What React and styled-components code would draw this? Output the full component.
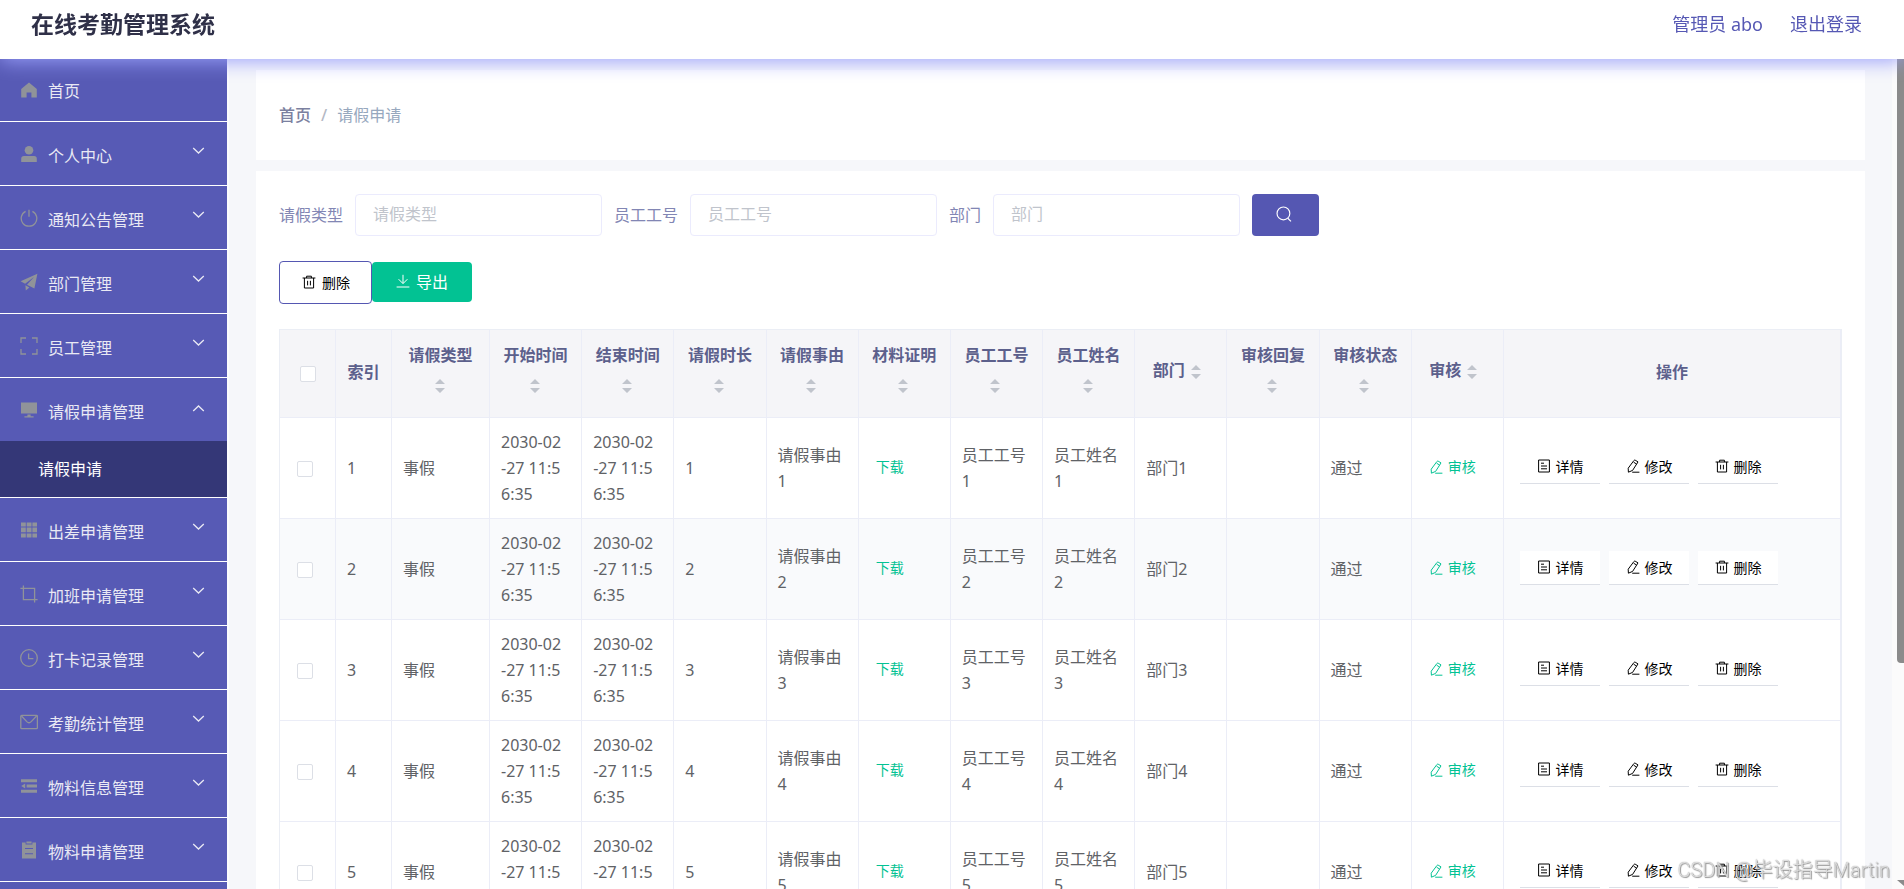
import React, { useState } from 'react';
import styled, { createGlobalStyle } from 'styled-components';

const GlobalStyle = createGlobalStyle`
    * {
        box-sizing: border-box;
    }
    body {
        margin: 0;
        background: #fbfbfb;
        font-family: "Noto Sans", "Noto Sans CJK SC", sans-serif;
        font-size: 16px;
        color: #606266;
    }
    a {
        text-decoration: none;
    }
    button, input {
        font-family: inherit;
    }
`;

//layout
const Page = styled.div`
    display: flex;
    flex-direction: column;
    height: 100vh;
    overflow: hidden;
`;
const Header = styled.header`
    position: relative;
    z-index: 1;
    display: flex;
    flex: none;
    align-items: flex-start;
    justify-content: space-between;
    height: 59px;
    padding: 10px 42px 0 31px;
    background: #fff;
    box-shadow: 0 2px 20px #9a9ffb;
`;
const Title = styled.h1`
    margin: 0;
    font-size: 23px;
    line-height: 28px;
    font-weight: 700;
    color: #2f3048;
`;
const UserNav = styled.nav`
    display: flex;
    gap: 27px;
    font-size: 18px;
    line-height: 28px;
    a {
        color: #5658b4;
    }
`;
const Body = styled.div`
    display: flex;
    flex: 1;
    min-height: 0;
`;
const Main = styled.main`
    flex: 1;
    min-width: 0;
    padding: 11px 27px 30px;
    overflow: auto;
    scrollbar-width: none;
    background: #f6f7fa;
`;
const ScrollRail = styled.div`
    display: flex;
    flex: none;
    flex-direction: column;
    justify-content: space-between;
    align-items: flex-end;
    width: 12px;
    padding-bottom: 3px;
    overflow: hidden;
`;
const ScrollThumb = styled.div`
    width: 7px;
    height: 73%;
    border-radius: 0 0 0 4px;
    background: #8b8b8b;
`;
const ScrollArrow = styled.div`
    width: 7px;
    height: 6px;
    background: #8b8b8b;
    clip-path: polygon(0 0, 100% 0, 100% 100%);
`;

//sidebar
const Sidebar = styled.aside`
    flex: none;
    width: 229px;
    overflow: hidden;
    background: #575ab5;
    border-right: 2px solid #fcfcfe;
`;
const MenuList = styled.ul`
    margin: 0;
    padding: 0;
    list-style: none;
`;
const MenuItem = styled.li`
    border-bottom: 1px solid #fff;
`;
const MenuLink = styled.a`
    display: flex;
    align-items: center;
    height: ${props => props.$home ? 62 : 63}px;
    padding: 0 22px 0 20px;
    color: #e9e9f4;
    svg {
        flex: none;
    }
`;
const MenuText = styled.span`
    flex: 1;
    padding: ${props => props.$home ? "2px 0 0 10px" : "4px 0 0 10px"};
    line-height: 24px;
`;
const SubLink = styled.a`
    display: block;
    padding-left: 38px;
    line-height: 56px;
    color: #fff;
    background: #343777;
`;
const Chevron = styled.svg`
    width: 13px;
    height: 13px;
    margin-bottom: ${props => props.$open ? 2 : 6}px;
    transform: ${props => props.$open ? "rotate(180deg)" : "none"};
`;

//content
const Card = styled.section`
    padding: 23px;
    background: #fff;
    & + & {
        margin-top: 11px;
    }
`;
const Breadcrumb = styled.nav`
    display: flex;
    gap: 10px;
    padding: 10px 0;
    line-height: 24px;
    color: #97a8be;
    a {
        font-weight: 500;
        color: #7b80a0;
    }
    span {
        font-weight: 500;
        color: #b4b8c4;
    }
`;
const SearchForm = styled.form`
    display: flex;
    flex-wrap: wrap;
    align-items: center;
    gap: 12px;
`;
const Field = styled.label`
    display: flex;
    align-items: center;
    gap: 12px;
    color: #8286b4;
    span {
        padding-bottom: 2px;
    }
`;
const TextInput = styled.input`
    width: 247px;
    height: 42px;
    padding: 0 17px 2px;
    border: 1px solid #ebebfd;
    border-radius: 4px;
    outline: none;
    font-size: 16px;
    color: #606266;
    &::placeholder {
        color: #c0c4cc;
        opacity: 1;
    }
`;
const SearchButton = styled.button`
    display: flex;
    align-items: center;
    justify-content: center;
    width: 67px;
    height: 42px;
    padding: 0 4px 2px 0;
    border: 0;
    border-radius: 4px;
    color: #fff;
    background: #5557b2;
`;
const Toolbar = styled.div`
    display: flex;
    align-items: flex-start;
    margin: 25px 0;
`;
const DeleteButton = styled.button`
    display: flex;
    align-items: center;
    gap: 6px;
    height: 43px;
    padding: 0 21px 2px 22px;
    border: 1px solid #5557b2;
    border-radius: 4px;
    font-size: 14px;
    color: #000;
    background: #fff;
`;
const ExportButton = styled.button`
    display: flex;
    align-items: center;
    gap: 6px;
    height: 40px;
    margin-top: 1px;
    padding: 0 24px 2px;
    border: 0;
    border-radius: 4px;
    font-size: 16px;
    color: #fff;
    background: #02c293;
`;

//table
const Table = styled.table`
    width: 100%;
    table-layout: fixed;
    border-collapse: separate;
    border-spacing: 0;
    border: solid #ebeef5;
    border-width: 1px 1px 0 1px;
    line-height: 26px;
`;
const Col = styled.col`
    width: ${props => props.$width ? props.$width + "px" : "auto"};
`;
const HeadCell = styled.th`
    height: 88px;
    padding: 0 9px 3px;
    border-right: 1px solid #ebedf7;
    border-bottom: 1px solid #ebedf7;
    background: #f5f5f8;
    line-height: 28px;
    font-weight: 700;
    text-align: center;
    vertical-align: middle;
    color: #5c608c;
`;
const Row = styled.tr`
    background: ${props => props.$striped ? "#f9fafc" : "#fff"};
`;
const Cell = styled.td`
    height: 101px;
    padding: ${props => props.$pad || "11px 8px 11px 11px"};
    border-right: 1px solid #ebedf7;
    border-bottom: 1px solid #ebedf7;
    vertical-align: middle;
    word-break: break-all;
`;
const DateText = styled.div`
    max-width: 62px;
`;
const Checkbox = styled.input`
    display: inline-block;
    width: 16px;
    height: 16px;
    margin: 0;
    appearance: none;
    border: 1px solid #dcdfe6;
    border-radius: 2px;
    background: #fff;
    vertical-align: middle;
    &:checked {
        background: #5557b2;
    }
`;
const SortIcon = styled.svg`
    width: 24px;
    height: 34px;
    vertical-align: middle;
    fill: #c0c4cc;
`;
const TextButton = styled.button`
    display: flex;
    align-items: center;
    gap: 5px;
    padding: 0;
    border: 0;
    font-size: 14px;
    line-height: 20px;
    color: #02c293;
    background: none;
`;
const Actions = styled.div`
    display: flex;
    gap: 9px;
`;
const ActionButton = styled.button`
    display: flex;
    align-items: center;
    justify-content: center;
    gap: 5px;
    width: 80px;
    height: 34px;
    padding: 0 0 2px;
    border: 0;
    border-bottom: 1px solid #dcdfe6;
    font-size: 14px;
    color: #000;
    background: #fff;
`;
const Watermark = styled.div`
    position: fixed;
    right: 14px;
    bottom: 4px;
    z-index: 2;
    font-family: Roboto, "Noto Sans CJK SC", sans-serif;
    font-size: 20px;
    line-height: 30px;
    font-weight: 300;
    color: rgba(255, 255, 255, 0.7);
    text-shadow: 0 0 1px #777, 1px 1px 1px #999;
    pointer-events: none;
`;

const MENU_ICONS = {
    home: <path fill="currentColor" d="M9 1.6 1.2 8v8.4h5.4v-5h4.8v5h5.4V8z" />,
    user: <g fill="currentColor"><circle cx="9" cy="5.2" r="4.3" /><path d="M1.2 17v-3.2c0-1.6 1-2.7 2.7-2.7h10.2c1.7 0 2.7 1.1 2.7 2.7V17z" /></g>,
    power: <path d="M9 .8v7M5.6 2.4a7.8 7.8 0 1 0 6.8 0" />,
    plane: <g fill="currentColor"><path d="M17.4.8.6 8.2l4.5 2.5L14 4 7 11.8l7.4 3.8z" /><path d="m5.4 12.2 4 2.2-3.6 3z" /></g>,
    full: <path d="M1 6V1h5M12 1h5v5M17 12v5h-5M6 17H1v-5" />,
    platform: <g fill="currentColor"><path d="M1 1.6h16v11H1zM7.4 13.6h3.2v1.6h3v1.2H4.4v-1.2h3z" /></g>,
    grid: <path fill="currentColor" d="M1 1.4h4.8v4H1zM6.7 1.4h4.8v4H6.7zM12.4 1.4H17v4h-4.6zM1 6.6h4.8v4.6H1zM6.7 6.6h4.8v4.6H6.7zM12.4 6.6H17v4.6h-4.6zM1 12.4h4.8v4H1zM6.7 12.4h4.8v4H6.7zM12.4 12.4H17v4h-4.6z" />,
    crop: <path d="M3.4.4v14.200h14.2M.4 3.4h14.2v14.2" />,
    time: <g><circle cx="9" cy="9" r="8.3" /><path d="M8.6 4.4v5.2h4.800" /></g>,
    message: <g><rect x=".8" y="2.3" width="16.6" height="13.4" rx="1" /><path d="m1.5 3 5.3 5.6c1.3 1.3 3.1 1.3 4.4 0L16.6 3" /></g>,
    fold: <path fill="currentColor" d="M1 2.2h16v3H1zM6.600 7.5H17v3H6.600zM1 12.8h16v3H1zM1.2 9l4-2.6v5.2z" />,
    order: <path fill="currentColor" fillRule="evenodd" d="M6.4.4h5.2v2.2H6.4zM2 1.6h3.6v1.8h6.8V1.6H16v15.800H2zM5 7v1.1h8V7zM5 12.2v1.1h8v-1.1z" />,
};
const ACTION_ICONS = {
    search: <g><circle cx="6.5" cy="6.5" r="5.600" /><path d="m10.3 10.7 2.8 2.8" /></g>,
    trash: <path d="M.6 3h12.8M4.6 3V1.2h4.8V3M2.4 3v10h9.2V3M5.6 5.8v4.6M8.4 5.8v4.6" />,
    download: <path d="M7 .8v8.6M2.6 5.2 7 9.600l4.4-4.400M.6 13h12.8" />,
    edit: <path d="M9.2 1.2 12 2.9 6.6 11.4 2.4 13.2 2.2 9.2 7.7 1.8c.4-.6 1-.9 1.500-.6zM7.6 3.2l2.900 1.8M6.200 13.200h7.200" />,
    document: <path d="M1.6 1h10.8v12H1.6zM4 4.2h3M4 7h6M4 9.8h6" />,
};

const MenuIcon = ({ name }) => (
    <svg width="18" height="18" viewBox="0 0 18 18" fill="none" stroke={/power|full|crop|time|message/.test(name) ? "currentColor" : "none"} strokeWidth="1.3" color="#909399" aria-hidden="true">
        {MENU_ICONS[name]}
    </svg>
);
const Icon = ({ name, size = 14 }) => (
    <svg width={size} height={size} viewBox="0 0 14 14" fill="none" stroke="currentColor" strokeWidth="1" aria-hidden="true">
        {ACTION_ICONS[name]}
    </svg>
);
const Sort = () => (
    <SortIcon viewBox="0 0 24 34" aria-hidden="true">
        <path d="M11 10l5 5H6zM11 24l5-5H6z" />
    </SortIcon>
);

const menus = [
    { icon: "home", text: "首页", home: true },
    { icon: "user", text: "个人中心" },
    { icon: "power", text: "通知公告管理" },
    { icon: "plane", text: "部门管理" },
    { icon: "full", text: "员工管理" },
    { icon: "platform", text: "请假申请管理", children: ["请假申请"] },
    { icon: "grid", text: "出差申请管理" },
    { icon: "crop", text: "加班申请管理" },
    { icon: "time", text: "打卡记录管理" },
    { icon: "message", text: "考勤统计管理" },
    { icon: "fold", text: "物料信息管理" },
    { icon: "order", text: "物料申请管理" },
];
const searchFields = ["请假类型", "员工工号", "部门"];
const columns = [
    { text: "索引", width: 56 },
    { text: "请假类型", width: 98, sort: true },
    { text: "开始时间", sort: true },
    { text: "结束时间", sort: true },
    { text: "请假时长", sort: true },
    { text: "请假事由", sort: true },
    { text: "材料证明", sort: true },
    { text: "员工工号", sort: true },
    { text: "员工姓名", sort: true },
    { text: "部门", sort: true },
    { text: "审核回复", sort: true },
    { text: "审核状态", sort: true },
    { text: "审核", sort: true },
    { text: "操作", width: 337 },
];
const rows = [1, 2, 3, 4, 5].map(n => ({
    id: n,
    type: "事假",
    start: "2030-02-27 11:56:35",
    end: "2030-02-27 11:56:35",
    hours: n,
    reason: "请假事由" + n,
    jobNo: "员工工号" + n,
    name: "员工姓名" + n,
    dept: "部门" + n,
    reply: "",
    status: "通过",
}));

const SideMenu = () => {
    const [opened, setOpened] = useState("请假申请管理");
    const toggle = (e, text) => {
        e.preventDefault();
        setOpened(opened === text ? "" : text);
    };
    return (
        <Sidebar>
            <MenuList>
                {menus.map(menu => (
                    <MenuItem key={menu.text}>
                        <MenuLink href="#" $home={menu.home} onClick={e => toggle(e, menu.text)}>
                            <MenuIcon name={menu.icon} />
                            <MenuText $home={menu.home}>{menu.text}</MenuText>
                            {!menu.home &&
                                <Chevron $open={opened === menu.text} viewBox="0 0 13 13" fill="none" stroke="currentColor" strokeWidth="1.3" aria-hidden="true">
                                    <path d="M1.2 4 6.5 9l5.3-5" />
                                </Chevron>}
                        </MenuLink>
                        {menu.children && opened === menu.text &&
                            menu.children.map(child => <SubLink key={child} href="#">{child}</SubLink>)}
                    </MenuItem>
                ))}
            </MenuList>
        </Sidebar>
    );
};

const LeaveTable = () => {
    const [checked, setChecked] = useState([]);
    const toggleAll = () => {
        setChecked(checked.length === rows.length ? [] : rows.map(row => row.id));
    };
    const toggleRow = (id) => {
        setChecked(checked.includes(id) ? checked.filter(item => item !== id) : [...checked, id]);
    };
    return (
        <Table>
            <colgroup>
                <Col $width={56} />
                {columns.map(col => <Col key={col.text} $width={col.width} />)}
            </colgroup>
            <thead>
                <tr>
                    <HeadCell>
                        <Checkbox type="checkbox" aria-label="全选" checked={checked.length === rows.length} onChange={toggleAll} />
                    </HeadCell>
                    {columns.map(col => (
                        <HeadCell key={col.text}>{col.text}{col.sort && <Sort />}</HeadCell>
                    ))}
                </tr>
            </thead>
            <tbody>
                {rows.map((row, index) => (
                    <Row key={row.id} $striped={index === 1}>
                        <Cell $pad="0 17px 2px">
                            <Checkbox type="checkbox" aria-label={"选择" + row.id} checked={checked.includes(row.id)} onChange={() => toggleRow(row.id)} />
                        </Cell>
                        <Cell>{row.id}</Cell>
                        <Cell>{row.type}</Cell>
                        <Cell><DateText>{row.start}</DateText></Cell>
                        <Cell><DateText>{row.end}</DateText></Cell>
                        <Cell>{row.hours}</Cell>
                        <Cell>{row.reason}</Cell>
                        <Cell $pad="0 17px 2px"><TextButton type="button">下载</TextButton></Cell>
                        <Cell>{row.jobNo}</Cell>
                        <Cell>{row.name}</Cell>
                        <Cell>{row.dept}</Cell>
                        <Cell>{row.reply}</Cell>
                        <Cell>{row.status}</Cell>
                        <Cell $pad="0 17px 2px"><TextButton type="button"><Icon name="edit" />审核</TextButton></Cell>
                        <Cell $pad="0 16px 2px">
                            <Actions>
                                <ActionButton type="button"><Icon name="document" />详情</ActionButton>
                                <ActionButton type="button"><Icon name="edit" />修改</ActionButton>
                                <ActionButton type="button"><Icon name="trash" />删除</ActionButton>
                            </Actions>
                        </Cell>
                    </Row>
                ))}
            </tbody>
        </Table>
    );
};

const App = () => (
    <Page>
        <GlobalStyle />
        <Header>
            <Title>在线考勤管理系统</Title>
            <UserNav>
                <a href="#">管理员 abo</a>
                <a href="#">退出登录</a>
            </UserNav>
        </Header>
        <Body>
            <SideMenu />
            <Main>
                <Card>
                    <Breadcrumb>
                        <a href="#">首页</a>
                        <span>/</span>
                        请假申请
                    </Breadcrumb>
                </Card>
                <Card>
                    <SearchForm onSubmit={e => e.preventDefault()}>
                        {searchFields.map(text => (
                            <Field key={text}>
                                <span>{text}</span>
                                <TextInput type="text" placeholder={text} />
                            </Field>
                        ))}
                        <SearchButton type="submit" aria-label="搜索"><Icon name="search" size={16} /></SearchButton>
                    </SearchForm>
                    <Toolbar>
                        <DeleteButton type="button"><Icon name="trash" />删除</DeleteButton>
                        <ExportButton type="button"><Icon name="download" />导出</ExportButton>
                    </Toolbar>
                    <LeaveTable />
                </Card>
            </Main>
            <ScrollRail>
                <ScrollThumb />
                <ScrollArrow />
            </ScrollRail>
        </Body>
        <Watermark>CSDN @毕设指导Martin</Watermark>
    </Page>
);

export default App;
